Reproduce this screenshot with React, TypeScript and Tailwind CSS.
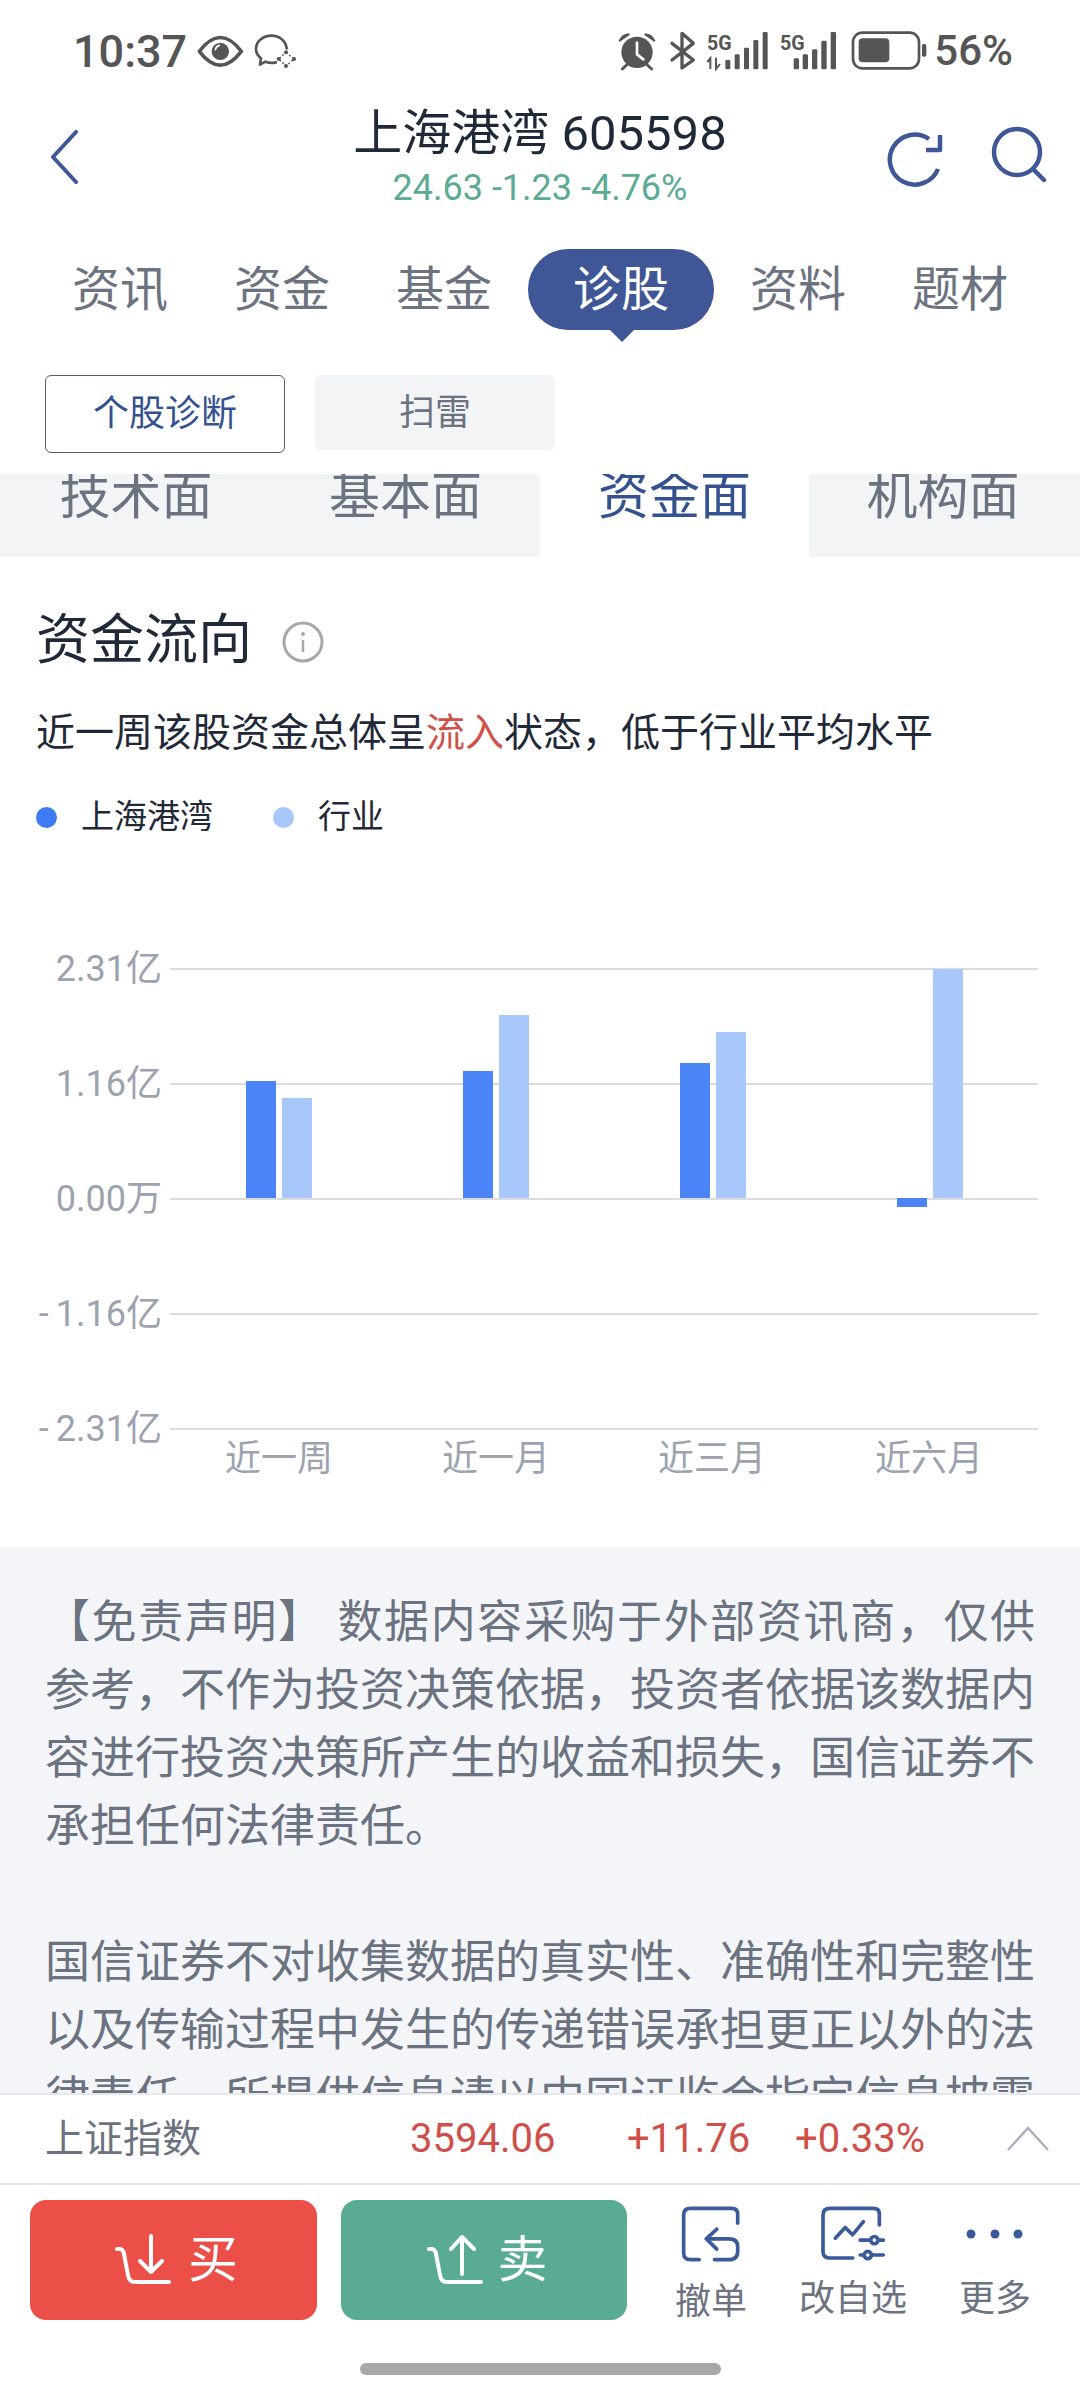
import React from "react";

const tabs = ["资讯", "资金", "基金", "诊股", "资料", "题材"];
const grid = [
  { y: 968, l: "2.31亿", neg: false },
  { y: 1083, l: "1.16亿", neg: false },
  { y: 1198, l: "0.00万", neg: false },
  { y: 1313, l: "1.16亿", neg: true },
  { y: 1428, l: "2.31亿", neg: true },
];
const xLabels = [
  { x: 279, l: "近一周" },
  { x: 496, l: "近一月" },
  { x: 712, l: "近三月" },
  { x: 929, l: "近六月" },
];
const bars = [
  { x: 246, y: 1081, h: 117, c: "#4a84f7" },
  { x: 282, y: 1098, h: 100, c: "#a8c8fb" },
  { x: 463, y: 1071, h: 127, c: "#4a84f7" },
  { x: 499, y: 1015, h: 183, c: "#a8c8fb" },
  { x: 680, y: 1063, h: 135, c: "#4a84f7" },
  { x: 716, y: 1032, h: 166, c: "#a8c8fb" },
  { x: 897, y: 1198, h: 9, c: "#4a84f7" },
  { x: 933, y: 969, h: 229, c: "#a8c8fb" },
];

function StatusLeft() {
  return (
    <svg width="100" height="36" viewBox="595 100 300 108" className="ml-[10px]">
      <path d="M602 155 Q665 72 728 155 Q665 238 602 155 Z" fill="none" stroke="#555" strokeWidth="11" strokeLinejoin="round" />
      <circle cx="665" cy="155" r="26" fill="#555" />
      <path d="M650 150 Q652 140 662 137" stroke="#fff" strokeWidth="5" fill="none" strokeLinecap="round" />
      <path d="M832 188 Q812 192 800 186 L784 195 L787 176 Q772 164 772 148 C772 124 795 108 818 108 C842 108 862 124 864 146" fill="none" stroke="#555" strokeWidth="8" strokeLinejoin="round" strokeLinecap="round" />
      <path d="M862 158 L886 178 L862 199 L840 178 Z" fill="none" stroke="#555" strokeWidth="4" strokeDasharray="6 6" />
      <circle cx="862" cy="158" r="6" fill="#555" />
      <circle cx="886" cy="178" r="6" fill="#555" />
      <circle cx="862" cy="199" r="6" fill="#555" />
      <circle cx="840" cy="178" r="6" fill="#555" />
    </svg>
  );
}

function StatusRight() {
  return (
    <svg width="312" height="42" viewBox="55 90 936 126">
      <circle cx="115" cy="157" r="47" fill="#555" />
      <path d="M115 128 V163 L134 178" stroke="#fff" strokeWidth="8" fill="none" strokeLinecap="round" strokeLinejoin="round" />
      <path d="M63 122 Q72 105 90 103 Z M167 122 Q158 105 140 103 Z" fill="#555" stroke="#555" strokeWidth="6" strokeLinejoin="round" />
      <path d="M84 195 L71 207 M146 195 L159 207" stroke="#555" strokeWidth="9" strokeLinecap="round" />
      <path d="M220 130 L284 180 L250 204 V100 L284 130 L220 180" fill="none" stroke="#555" strokeWidth="10" strokeLinejoin="round" strokeLinecap="round" />
      <text x="325" y="149" fontSize="62" fontWeight="700" fill="#555" textLength="74" lengthAdjust="spacingAndGlyphs">5G</text>
      <path d="M335 207 V175 L326 186 M352 173 V207 L364 192" fill="none" stroke="#555" strokeWidth="6" />
      {[
        [380, 180],
        [408, 163],
        [436, 143],
        [464, 120],
        [492, 96],
      ].map(([x, y]) => (
        <rect key={x} x={x} y={y} width="15" height={208 - y} rx="4" fill="#555" />
      ))}
      <text x="544" y="149" fontSize="62" fontWeight="700" fill="#555" textLength="74" lengthAdjust="spacingAndGlyphs">5G</text>
      {[
        [585, 175],
        [612, 163],
        [640, 148],
        [668, 122],
        [696, 96],
      ].map(([x, y]) => (
        <rect key={x} x={x} y={y} width="16" height={208 - y} rx="4" fill="#555" />
      ))}
      <rect x="763" y="98" width="198" height="107" rx="28" fill="none" stroke="#555" strokeWidth="8" />
      <rect x="780" y="115" width="92" height="72" rx="12" fill="#555" />
      <rect x="970" y="132" width="13" height="38" rx="5" fill="#555" />
    </svg>
  );
}

function BuyIcon() {
  return (
    <svg width="58" height="52" viewBox="0 0 58 52" fill="none" stroke="#fff" strokeWidth="4" strokeLinecap="round" strokeLinejoin="round">
      <path d="M2 15 H5 Q8 15 9 20 L13 41 Q14 48 20 48 H54" />
      <path d="M36 2 V38 M25 27 L36 38 L47 27" />
    </svg>
  );
}

function SellIcon() {
  return (
    <svg width="58" height="52" viewBox="0 0 58 52" fill="none" stroke="#fff" strokeWidth="4" strokeLinecap="round" strokeLinejoin="round">
      <path d="M2 15 H5 Q8 15 9 20 L13 41 Q14 48 20 48 H54" />
      <path d="M35 3 V40 M24 15 L35 3 L47 15" />
    </svg>
  );
}

export default function App() {
  return (
    <div className="w-[1080px] h-[2400px] bg-white overflow-hidden flex flex-col font-['Roboto','Noto_Sans_CJK_SC',sans-serif]">
      {/* status bar */}
      <div className="h-[102px] shrink-0 flex items-center pl-[73px] pr-[67px] text-[#555] font-medium">
        <span className="leading-none text-[45px]">10:37</span>
        <StatusLeft />
        <div className="ml-auto flex items-center gap-[5px] text-[42px]">
          <StatusRight />
          <span className="leading-none">56%</span>
        </div>
      </div>

      {/* header */}
      <div className="h-[147px] shrink-0 grid grid-cols-[240px_1fr_240px]">
        <div className="pl-[50px] pt-[28px]">
          <svg width="30" height="54" viewBox="0 0 30 54" fill="none" stroke="#3f5796" strokeWidth="4" strokeLinecap="round" strokeLinejoin="round">
            <path d="M26 2 L3 27 L26 52" />
          </svg>
        </div>
        <div className="flex flex-col items-center">
          <div className="mt-[6px] text-[49px] leading-[52px] text-[#1f2937] whitespace-nowrap">上海港湾 605598</div>
          <div className="mt-[8px] text-[36px] leading-[40px] text-[#5bab94] whitespace-nowrap">24.63 -1.23 -4.76%</div>
        </div>
        <div className="flex justify-end items-start pr-[33px] gap-[48px] pt-[24px]">
          <svg width="56" height="56" viewBox="0 0 56 56" fill="none" stroke="#3f5796" strokeWidth="4.5" strokeLinejoin="round" className="mt-[5px]">
            <path d="M42 8 A25 25 0 1 0 51 38" />
            <path d="M53 4 V19 H39" />
          </svg>
          <svg width="56" height="56" viewBox="0 0 56 56" fill="none" stroke="#3f5796" strokeWidth="4.5" strokeLinecap="round">
            <circle cx="26" cy="26" r="23" />
            <path d="M42 43 L53 54" />
          </svg>
        </div>
      </div>

      {/* main tabs */}
      <div className="h-[93px] shrink-0 flex items-start pl-[39px] text-[48px]">
        {tabs.map((t) =>
          t === "诊股" ? (
            <div key={t} className="relative w-[186px] h-[81px] mx-[3px] rounded-[40px] bg-[#3f5796] text-white flex items-center justify-center">
              {t}
              <div className="absolute left-[82px] top-[81px] w-0 h-0 border-x-[12px] border-t-[12px] border-x-transparent border-t-[#3f5796]" />
            </div>
          ) : (
            <div key={t} className="w-[162px] h-[81px] text-[#6b7280] flex items-center justify-center">
              {t}
            </div>
          )
        )}
      </div>

      {/* sub buttons */}
      <div className="h-[132px] shrink-0 pt-[33px] pl-[45px] flex items-start gap-[30px] text-[36px]">
        <div className="w-[240px] h-[78px] border-[1.5px] border-[#4b5f73] rounded-[6px] text-[#34528f] flex items-center justify-center">个股诊断</div>
        <div className="w-[240px] h-[75px] bg-[#f3f4f6] rounded-[6px] text-[#6b7280] flex items-center justify-center">扫雷</div>
      </div>

      {/* section tabs, scrolled under the header */}
      <div className="h-[83px] shrink-0 grid grid-cols-[270px_270px_269px_271px] overflow-hidden text-[51px] leading-[60px] text-center">
        <div className="bg-[#f3f4f6] text-[#6b7280] pl-[2px]"><div className="-mt-[7px]">技术面</div></div>
        <div className="bg-[#f3f4f6] text-[#6b7280] pl-[1px]"><div className="-mt-[7px]">基本面</div></div>
        <div className="bg-white text-[#34528f]"><div className="-mt-[7px]">资金面</div></div>
        <div className="bg-[#f3f4f6] text-[#6b7280] pr-[3px]"><div className="-mt-[7px]">机构面</div></div>
      </div>

      {/* fund flow */}
      <div className="h-[990px] shrink-0 bg-white">
        <div className="pl-[36px] pt-[54px]">
          <div className="flex items-center gap-[30px] h-[60px]">
            <span className="text-[54px] leading-[60px] text-[#1f2937]">资金流向</span>
            <svg width="42" height="42" viewBox="0 0 42 42" fill="none" stroke="#a8a8a8" className="mt-[2px]">
              <circle cx="21" cy="21" r="19" strokeWidth="3" />
              <circle cx="21" cy="13" r="1.5" fill="#a8a8a8" />
              <path d="M21 19 V31" strokeWidth="2.5" />
            </svg>
          </div>
          <div className="mt-[37px] text-[39px] leading-[50px] text-[#1f2937] whitespace-nowrap">
            近一周该股资金总体呈<span className="text-[#d0504a]">流入</span>状态，低于行业平均水平
          </div>
          <div className="mt-[39px] h-[40px] flex items-center text-[33px] text-[#1f2937]">
            <span className="w-[21px] h-[21px] rounded-full bg-[#3f7bf5]" />
            <span className="ml-[24px]">上海港湾</span>
            <span className="ml-[60px] w-[21px] h-[21px] rounded-full bg-[#a8c8fb]" />
            <span className="ml-[24px]">行业</span>
          </div>
        </div>
        <svg width="1080" height="560" viewBox="0 940 1080 560" className="mt-[103px] block">
          {grid.map((g) => (
            <g key={g.y}>
              <line x1="170" x2="1038" y1={g.y + 1} y2={g.y + 1} stroke="#d9dce1" strokeWidth="2" />
              <text x="162" y={g.y + 13} textAnchor="end" fontSize="36" fill="#9ca3af">
                {g.neg ? <tspan>-</tspan> : null}
                <tspan dx={g.neg ? 7 : 0}>{g.l}</tspan>
              </text>
            </g>
          ))}
          {bars.map((b) => (
            <rect key={b.x} x={b.x} y={b.y} width="30" height={b.h} fill={b.c} />
          ))}
          {xLabels.map((l) => (
            <text key={l.x} x={l.x} y="1471" textAnchor="middle" fontSize="36" fill="#9ca3af">{l.l}</text>
          ))}
        </svg>
      </div>

      {/* disclaimer */}
      <div className="flex-1 min-h-0 overflow-hidden bg-[#f3f5f8] px-[45px] pt-[42px] text-[45px] leading-[68px] text-[#6b7280] text-justify">
        <p>【免责声明】 数据内容采购于外部资讯商，仅供参考，不作为投资决策依据，投资者依据该数据内容进行投资决策所产生的收益和损失，国信证券不承担任何法律责任。</p>
        <p className="mt-[68px]">国信证券不对收集数据的真实性、准确性和完整性以及传输过程中发生的传递错误承担更正以外的法律责任，所提供信息请以中国证监会指定信息披露</p>
      </div>

      {/* index row */}
      <div className="h-[92px] shrink-0 bg-white border-y-2 border-[#e5e7eb] flex items-center pl-[45px] text-[40px]">
        <span className="text-[#6b7280] text-[39px] w-[365px]">上证指数</span>
        <span className="text-[#cf4f49] w-[217px]">3594.06</span>
        <span className="text-[#cf4f49] w-[168px]">+11.76</span>
        <span className="text-[#cf4f49] w-[211px]">+0.33%</span>
        <svg width="44" height="26" viewBox="0 0 44 26" fill="none" stroke="#a9afbb" strokeWidth="2.5">
          <path d="M2 24 L22 2 L42 24" />
        </svg>
      </div>

      {/* actions */}
      <div className="h-[215px] shrink-0 bg-white flex flex-col">
        <div className="flex pt-[15px] pl-[30px]">
          <div className="w-[287px] h-[120px] rounded-[16px] bg-[#eb4f47] text-white text-[50px] flex items-center justify-center gap-[15px] pl-[6px]">
            <BuyIcon />
            <span>买</span>
          </div>
          <div className="ml-[24px] w-[286px] h-[120px] rounded-[16px] bg-[#59ab94] text-white text-[50px] flex items-center justify-center gap-[13px] pl-[6px]">
            <SellIcon />
            <span>卖</span>
          </div>
          <div className="ml-[13px] flex text-[36px] leading-[40px] text-[#6b7280] text-center">
            <div className="w-[142px] flex flex-col items-center pt-[5px]">
              <svg width="62" height="58" viewBox="125 75 185 175" fill="none" stroke="#3a5a9a" strokeWidth="11" strokeLinecap="round" strokeLinejoin="round">
                <path d="M298 130 V102 Q298 85 280 85 H155 Q135 85 135 105 V220 Q135 240 155 240 H182" />
                <path d="M228 240 H270 Q298 240 298 215 V200 Q298 177 270 177 H205" />
                <path d="M235 148 L203 177 L235 208" />
              </svg>
              <span className="mt-[19px]">撤单</span>
            </div>
            <div className="w-[142px] flex flex-col items-center pt-[5px]">
              <svg width="67" height="58" viewBox="540 75 200 175" fill="none" stroke="#3a5a9a" strokeWidth="11" strokeLinecap="round" strokeLinejoin="round">
                <path d="M718 135 V102 Q718 85 700 85 H570 Q548 85 548 105 V215 Q548 235 570 235 H638" />
                <path d="M585 175 L615 143 L637 165 L670 125" />
                <path d="M660 181 H730 M660 226 H730" />
                <circle cx="703" cy="181" r="11" fill="#fff" />
                <circle cx="683" cy="226" r="11" fill="#fff" />
              </svg>
              <span className="mt-[16px]">改自选</span>
            </div>
            <div className="w-[142px] flex flex-col items-center pt-[5px]">
              <svg width="62" height="58" viewBox="0 0 62 58" fill="#3a5a9a">
                <circle cx="7" cy="29" r="4.5" />
                <circle cx="31" cy="29" r="4.5" />
                <circle cx="54" cy="29" r="4.5" />
              </svg>
              <span className="mt-[16px]">更多</span>
            </div>
          </div>
        </div>
        <div className="mt-[41px] mx-auto w-[361px] h-[12px] rounded-full bg-[#a8a8a8]" />
      </div>
    </div>
  );
}
